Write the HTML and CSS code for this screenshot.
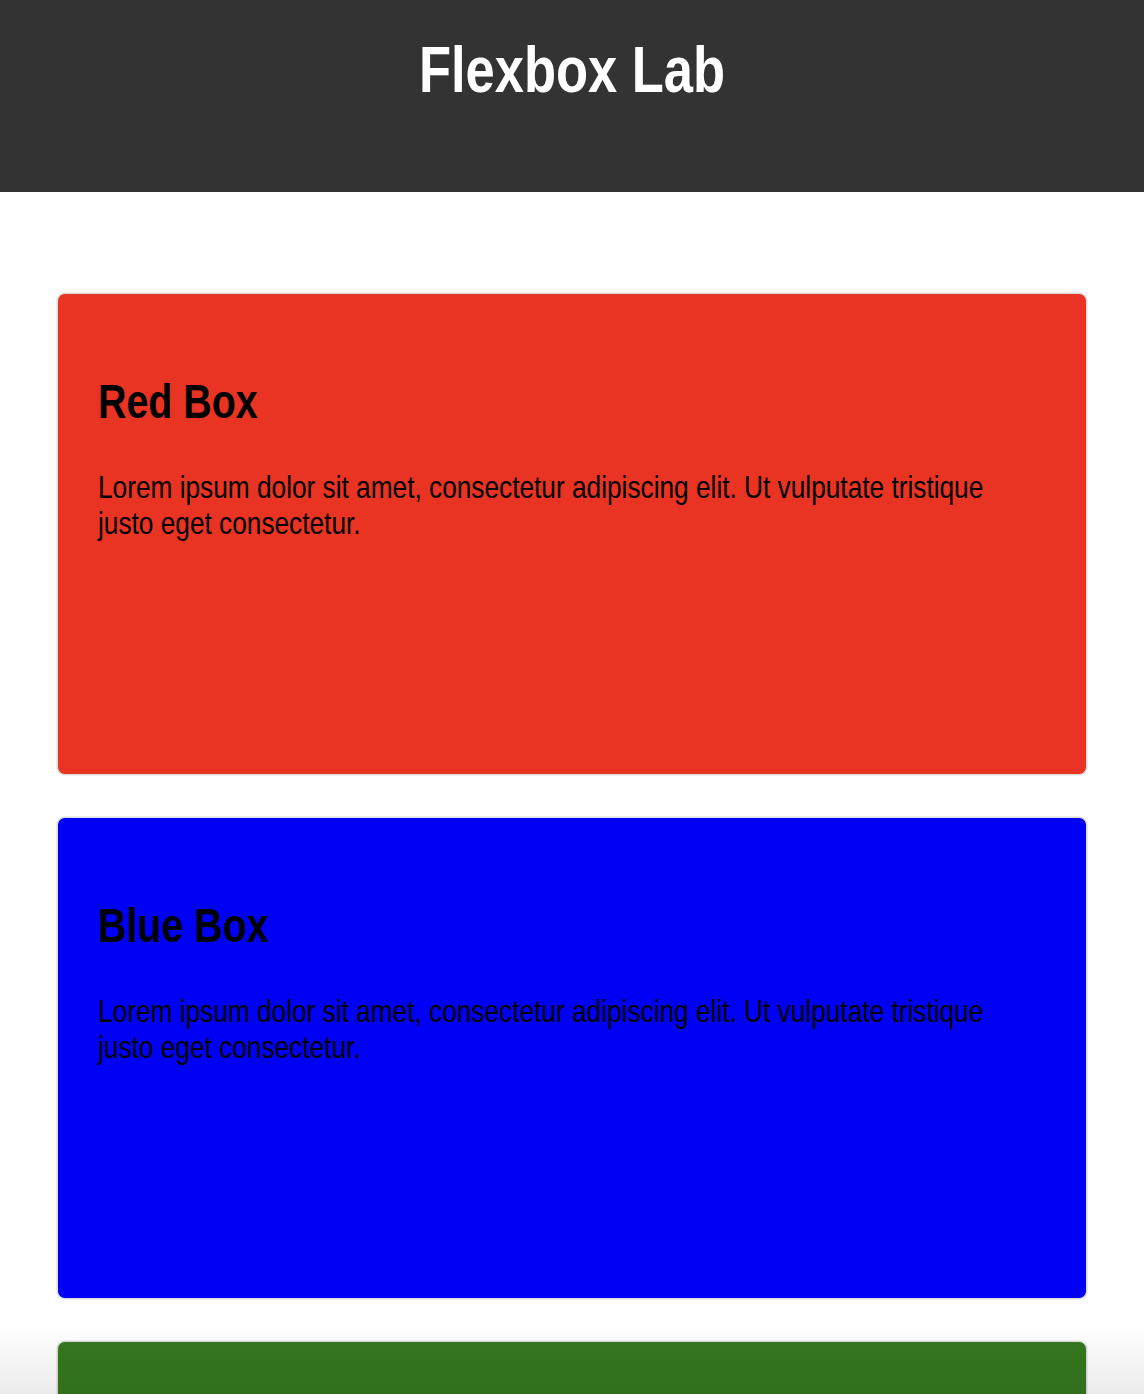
FILE: index.html
```html
<!DOCTYPE html>
<html lang="en">
<head>
<meta charset="utf-8">
<title>Flexbox Lab</title>
<link rel="stylesheet" href="styles.css">
</head>
<body>
<header class="site-header">
  <h1 class="site-title">Flexbox Lab</h1>
</header>
<main class="boxes">
  <section class="box box-red">
    <h2 class="box-title">Red Box</h2>
    <p class="box-text">Lorem ipsum dolor sit amet, consectetur adipiscing elit. Ut vulputate tristique justo eget consectetur.</p>
  </section>
  <section class="box box-blue">
    <h2 class="box-title">Blue Box</h2>
    <p class="box-text">Lorem ipsum dolor sit amet, consectetur adipiscing elit. Ut vulputate tristique justo eget consectetur.</p>
  </section>
  <section class="box box-green">
    <h2 class="box-title">Green Box</h2>
    <p class="box-text">Lorem ipsum dolor sit amet, consectetur adipiscing elit. Ut vulputate tristique justo eget consectetur.</p>
  </section>
</main>
<div class="window-shade"></div>
</body>
</html>
```
FILE: styles.css
```css
html, body {
  margin: 0;
  padding: 0;
}
body {
  font-family: "Liberation Sans", Arial, sans-serif;
  background: #fff;
  color: #000;
}
.site-header {
  background: #333333;
  height: 192px;
  padding-top: 1px;
  box-sizing: border-box;
}
.site-title {
  margin: 33px 0 0;
  text-align: center;
  color: #fff;
  font-size: 64px;
  font-weight: bold;
  line-height: 1.15;
  transform: scaleX(0.82);
  transform-origin: center;
}
.boxes {
  display: flex;
  flex-direction: column;
  align-items: center;
  gap: 42px;
  padding: 101px 0 60px;
}
.box {
  width: 90%;
  box-sizing: border-box;
  height: 482px;
  border: 1px solid #dcdcdc;
  box-shadow: 0 0 0 1px rgba(220, 220, 220, 0.5);
  border-radius: 8px;
  padding: 40px 40px;
}
.box-red { background: #e93323; }
.box-blue { background: #0000f5; }
.box-green { background: #367920; }
.box-title {
  margin: 40px 0 0;
  font-size: 48px;
  font-weight: bold;
  line-height: 1.15;
  transform: scaleX(0.82);
  transform-origin: left center;
}
.box-text {
  margin: 40px 0 0;
  width: 1100px;
  font-size: 32px;
  line-height: 36px;
  transform: scaleX(0.82);
  transform-origin: left center;
}
.window-shade {
  position: fixed;
  left: 0;
  right: 0;
  bottom: 0;
  height: 70px;
  pointer-events: none;
  background: linear-gradient(to bottom, rgba(0,0,0,0), rgba(0,0,0,0.08));
}
```
